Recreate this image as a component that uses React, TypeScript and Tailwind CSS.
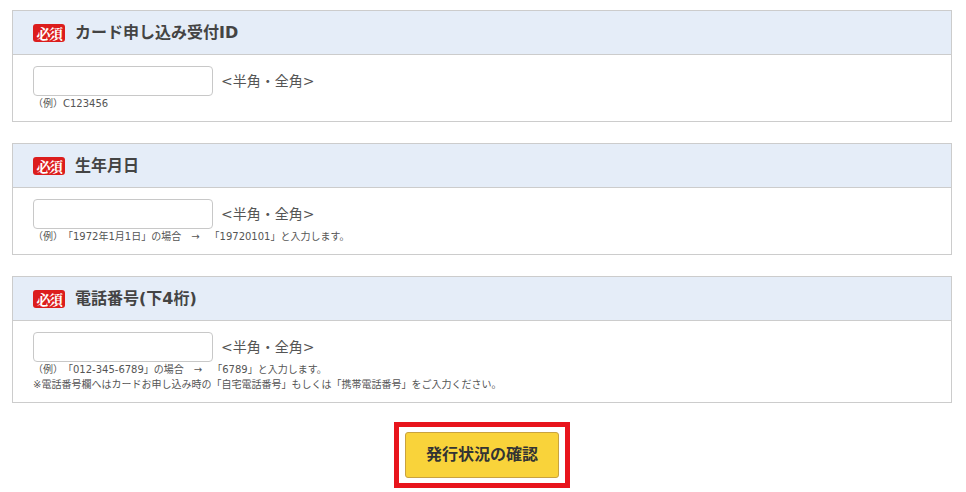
import React from "react";

const font = { fontFamily: '"DejaVu Sans", "Noto Sans CJK JP", "Noto Sans", sans-serif' };

function Badge() {
  return (
    <span
      className="inline-flex h-[18px] w-[32px] items-center justify-center rounded-[3px] bg-[#dc1d1d] text-[14px] font-bold leading-none text-white tracking-[-1.5px]"
      style={{ fontFamily: '"Noto Serif CJK JP", "Noto Sans CJK JP", serif' }}
    >
      必須
    </span>
  );
}

function Panel({ title, notes }: { title: string; notes: string[] }) {
  return (
    <div className="border border-[#cccccc] bg-white">
      <div className="flex h-[44px] items-center gap-[10px] border-b border-[#cccccc] bg-[#e5edf8] pl-[20px]">
        <Badge />
        <span className="text-[16px] font-bold leading-[20px] text-[#444444]">{title}</span>
      </div>
      <div className="pl-[20px] pt-[11px] pb-[10px]">
        <div className="flex h-[30px] items-center gap-[8px]">
          <input className="h-[30px] w-[180px] rounded-[4px] border border-[#c8c8c8] bg-white outline-none" />
          <span className="text-[14px] leading-[20px] text-[#555555]">&lt;半角・全角&gt;</span>
        </div>
        <div className="text-[10px] leading-[15px] text-[#555555] [text-spacing-trim:space-all]">
          {notes.map((n, i) => (
            <div key={i}>{n}</div>
          ))}
        </div>
      </div>
    </div>
  );
}

export default function App() {
  return (
    <div className="min-h-[492px] w-[966px] bg-white" style={font}>
      <div className="ml-[12px] flex w-[940px] flex-col gap-[21px] pt-[10px]">
        <Panel title="カード申し込み受付ID" notes={["（例）C123456"]} />
        <Panel
          title="生年月日"
          notes={["（例）「1972年1月1日」の場合　→　「19720101」と入力します。"]}
        />
        <Panel
          title="電話番号(下4桁)"
          notes={[
            "（例）「012-345-6789」の場合　→　「6789」と入力します。",
            "※電話番号欄へはカードお申し込み時の「自宅電話番号」もしくは「携帯電話番号」をご入力ください。",
          ]}
        />
      </div>
      <div className="mt-[19px] flex justify-center">
        <div className="ml-[-2px] border-[5px] border-[#e8141c] px-[6px] py-[5px]">
          <button className="h-[46px] w-[154px] rounded-[3px] border border-[#c9a23e] bg-[#f9d33a] text-[16px] font-bold text-[#333333]">
            発行状況の確認
          </button>
        </div>
      </div>
    </div>
  );
}
